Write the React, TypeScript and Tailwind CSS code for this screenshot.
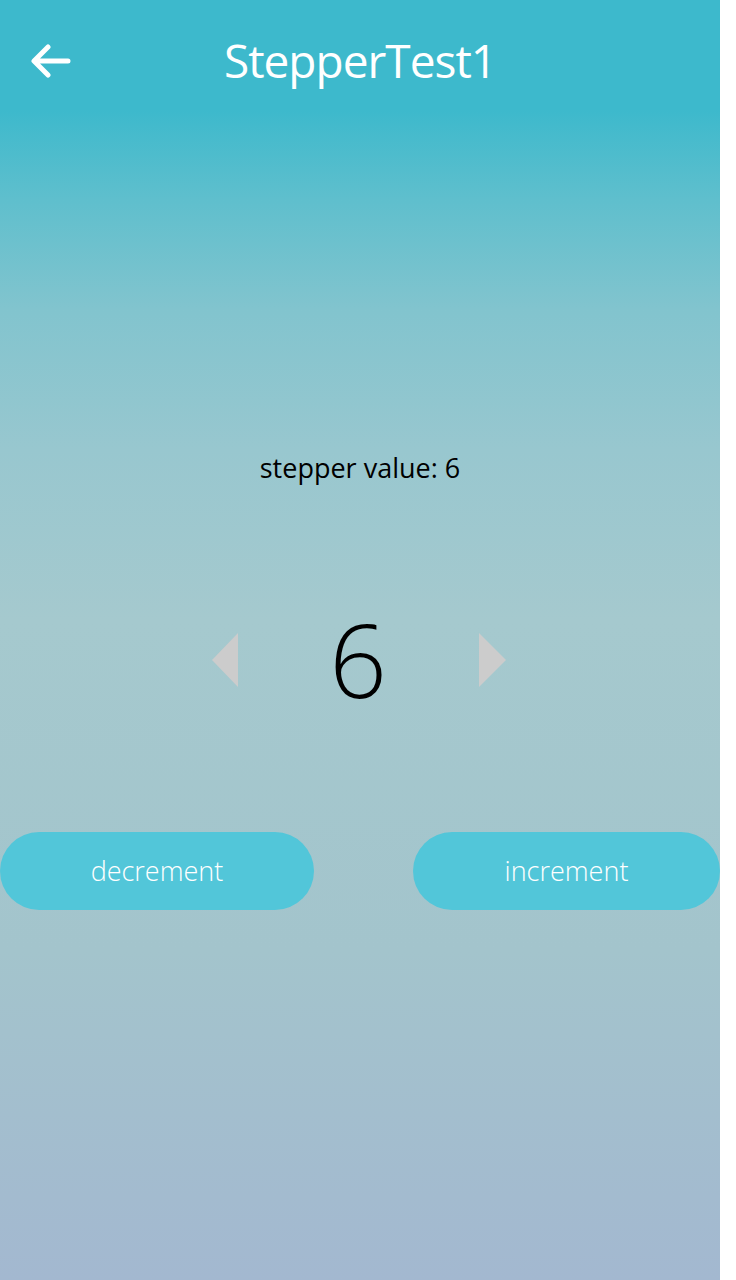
import React, { useState } from "react";

const App = () => {
  const [value, setValue] = useState(6); // current stepper value

  return (
    <div className="w-[736px] h-[1280px] bg-white flex">
      <div
        className="w-[720px] h-[1280px] flex flex-col bg-[linear-gradient(180deg,#3db9cc_0px,#3db9cc_110px,#5fbfcd_200px,#82c4ce_310px,#98c7cf_450px,#a5c9ce_620px,#a3c4cc_950px,#a3b8d0_1280px)]"
        style={{ fontFamily: '"Open Sans", "Noto Sans", sans-serif' }}
      >
        {/* Header */}
        <div className="relative h-[120px] flex items-center justify-center">
          <button className="absolute left-[30px] top-[44px]" aria-label="back">
            <svg width="42" height="34" viewBox="0 0 42 34" fill="none">
              <path
                d="M38 17H5M18 3L4 17l14 14"
                stroke="white"
                strokeWidth="5"
                strokeLinecap="round"
                strokeLinejoin="round"
              />
            </svg>
          </button>
          <h1 className="text-white text-[46px] font-normal tracking-[-1px] leading-none">
            StepperTest1
          </h1>
        </div>

        {/* Label */}
        <div className="mt-[334px] text-center text-black text-[27px] leading-none">
          stepper value: {value}
        </div>

        {/* Stepper */}
        <div className="mt-[128px] flex items-center justify-center pr-[3px]">
          <button onClick={() => setValue(value - 1)} aria-label="previous">
            <svg width="26" height="54" viewBox="0 0 26 54" className="block">
              <polygon points="26,0 0,27 26,54" fill="#cccccc" />
            </svg>
          </button>
          <span className="w-[241px] text-center text-black text-[101px] font-light leading-none">
            {value}
          </span>
          <button onClick={() => setValue(value + 1)} aria-label="next">
            <svg width="27" height="54" viewBox="0 0 27 54" className="block">
              <polygon points="0,0 27,27 0,54" fill="#cccccc" />
            </svg>
          </button>
        </div>

        {/* Buttons */}
        <div className="mt-[122px] flex justify-between">
          <button
            onClick={() => setValue(value - 1)}
            className="w-[314px] h-[78px] rounded-full bg-[#52c6d9] text-white text-[27px] font-light"
          >
            decrement
          </button>
          <button
            onClick={() => setValue(value + 1)}
            className="w-[307px] h-[78px] rounded-full bg-[#52c6d9] text-white text-[27px] font-light"
          >
            increment
          </button>
        </div>
      </div>
    </div>
  );
};

export default App;
